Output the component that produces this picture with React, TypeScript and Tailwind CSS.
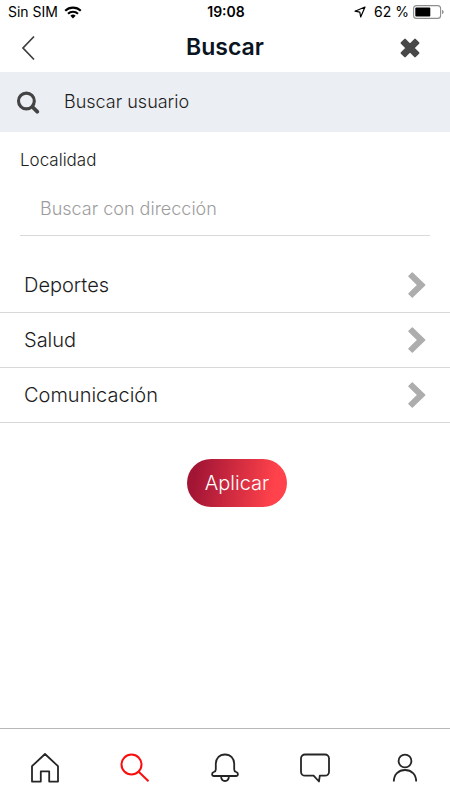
import type { ReactNode } from 'react';

const categories = ['Deportes', 'Salud', 'Comunicación'];

function StatusBar() {
  return (
    <div className="grid h-6 grid-cols-[1fr_auto_1fr] items-center pr-1.5 pl-2 text-sm text-black">
      <div className="flex items-center gap-1.5">
        <span>Sin SIM</span>
        <svg width="18" height="13" viewBox="0 0 18 13" aria-hidden="true">
          <path d="M9 12.5 6.4 9.8a3.8 3.8 0 0 1 5.2 0Z" fill="#000" />
          <path d="M1.2 4.7a11.3 11.3 0 0 1 15.6 0M4 7.7a7.2 7.2 0 0 1 10 0" fill="none" stroke="#000" strokeWidth="2.1" />
        </svg>
      </div>
      <span className="text-center font-semibold">19:08</span>
      <div className="flex items-center justify-end gap-1">
        <svg width="12" height="12" viewBox="0 0 12 12" className="mr-1" aria-hidden="true">
          <path d="M11 1 1 5.2l4.8.9.9 4.9Z" fill="none" stroke="#000" strokeWidth="1.2" strokeLinejoin="round" />
        </svg>
        <span className="whitespace-nowrap">62 %</span>
        <svg width="31" height="14" viewBox="0 0 31 14" aria-hidden="true">
          <rect x="0.6" y="0.6" width="27" height="12.8" rx="3" fill="none" stroke="#8e8e8e" strokeWidth="1.1" />
          <rect x="2.3" y="2.5" width="15" height="9" rx="1" fill="#000" />
          <path d="M29 5v4c1-.3 1.6-1.1 1.6-2S30 5.3 29 5Z" fill="#8e8e8e" />
        </svg>
      </div>
    </div>
  );
}

function Header() {
  return (
    <header className="grid h-12 grid-cols-3 items-center px-4">
      <button type="button" aria-label="Volver" className="flex w-6 justify-center">
        <svg width="14" height="26" viewBox="0 0 14 26" fill="none" stroke="#3c3c3c" strokeWidth="1.7">
          <path d="M13 1.5 2 13l11 11.5" />
        </svg>
      </button>
      <h1 className="pb-0.5 text-center text-[23px] leading-7 font-semibold text-[#0b1522]">Buscar</h1>
      <button type="button" aria-label="Cerrar" className="mr-3 flex w-6 justify-center justify-self-end">
        <svg width="20" height="20" viewBox="0 0 20 20" fill="#484848" stroke="#484848" strokeWidth="2" strokeLinejoin="round">
          <path d="m5 1.6 5 5 5-5L18.400 5l-5 5 5 5L15 18.400l-5-5-5 5L1.600 15l5-5-5-5Z" />
        </svg>
      </button>
    </header>
  );
}

function NavItem({ label, active, children }: { label: string; active?: boolean; children: ReactNode }) {
  return (
    <a href="#" aria-label={label} aria-current={active ? 'page' : undefined} className={active ? 'text-[#fb0d0d]' : 'text-[#252525]'}>
      <svg width="30" height="30" viewBox="0 0 30 30" fill="none" stroke="currentColor" strokeWidth="1.8" strokeLinejoin="round">
        {children}
      </svg>
    </a>
  );
}

function BottomNav() {
  return (
    <nav className="flex h-18 items-center justify-around border-t border-[#b8b8b8] pt-1.5">
      <NavItem label="Inicio">
        <path d="M15 1 2 13.2v15.4h8.8V18.4h8.4v10.2H28V13.2Z" />
      </NavItem>
      <NavItem label="Buscar" active>
        <circle cx="11.5" cy="11.5" r="10" strokeWidth="2" />
        <path d="m18.7 18.7 9.8 9.5" strokeWidth="2" />
      </NavItem>
      <NavItem label="Notificaciones">
        <path d="M15 1.5c-5.6 0-9.2 4-9.2 9.3v5.7c0 1.6-.6 2.1-2 2.5-2.3.7-2.200 4 .2 4h22c2.400 0 2.500-3.300.2-4-1.400-.4-2-.9-2-2.500v-5.700c0-5.300-3.600-9.300-9.200-9.300Z" />
        <path d="M11 23c.2 3.200 1.5 5 4 5s3.800-1.800 4-5" />
      </NavItem>
      <NavItem label="Mensajes">
        <path d="M5 1.500h20a4 4 0 0 1 4 4v13.200a4 4 0 0 1-4 4h-5.200l-.8 5.800-5.400-5.800H5a4 4 0 0 1-4-4V5.500a4 4 0 0 1 4-4Z" />
      </NavItem>
      <NavItem label="Perfil">
        <circle cx="15" cy="8" r="6.400" />
        <path d="M3.800 28.500C3.800 21.500 8.500 17 15 17s11.200 4.500 11.200 11.500" />
      </NavItem>
    </nav>
  );
}

export default function App() {
  return (
    <div className="flex min-h-screen flex-col bg-white font-['Inter','Liberation_Sans',sans-serif]">
      <StatusBar />
      <Header />

      <main className="flex flex-1 flex-col">
        <label className="flex h-15 items-center gap-6 bg-[#ebeef2] px-4">
          <svg width="24" height="24" viewBox="0 0 24 24" fill="none" stroke="#434343" aria-hidden="true">
            <circle cx="10.4" cy="11" r="7.9" strokeWidth="3.1" />
            <path d="m16.5 17 4.7 4.7" strokeWidth="3.8" strokeLinecap="round" />
          </svg>
          <input
            type="text"
            aria-label="Buscar usuario"
            placeholder="Buscar usuario"
            className="min-w-0 flex-1 text-lg font-light outline-none placeholder:text-[#1c1c1c]"
          />
        </label>

        <div className="flex flex-col px-5 pt-3.5">
          <label htmlFor="address" className="text-[17px] leading-7 font-light text-[#1c1c1c]">
            Localidad
          </label>
          <input
            id="address"
            type="text"
            placeholder="Buscar con dirección"
            className="mt-2 h-13.5 border-b border-[#d9d9d9] px-5 text-lg font-light outline-none placeholder:text-[#9d9d9d]"
          />
        </div>

        <ul className="mt-5.5">
          {categories.map((name) => (
            <li key={name} className="border-b border-[#d9d9d9]">
              <button type="button" className="flex w-full items-center justify-between px-6 py-3.5 text-left text-xl leading-6.5 font-light text-[#1c1c1c]">
                {name}
                <svg width="20" height="26" viewBox="0 0 20 26" fill="#adadad" stroke="#adadad" strokeWidth="1.5" strokeLinejoin="round" aria-hidden="true">
                  <path d="m6.300 1 12.400 12L6.300 25 3 21.800 11.800 13 3 4.200Z" />
                </svg>
              </button>
            </li>
          ))}
        </ul>

        <button
          type="button"
          className="mt-9 ml-6 h-12 self-center rounded-full bg-linear-[100deg] from-[#a31535] from-10% to-[#ff424b] to-85% px-4.5 text-xl font-light text-white"
        >
          Aplicar
        </button>
      </main>

      <BottomNav />
    </div>
  );
}
